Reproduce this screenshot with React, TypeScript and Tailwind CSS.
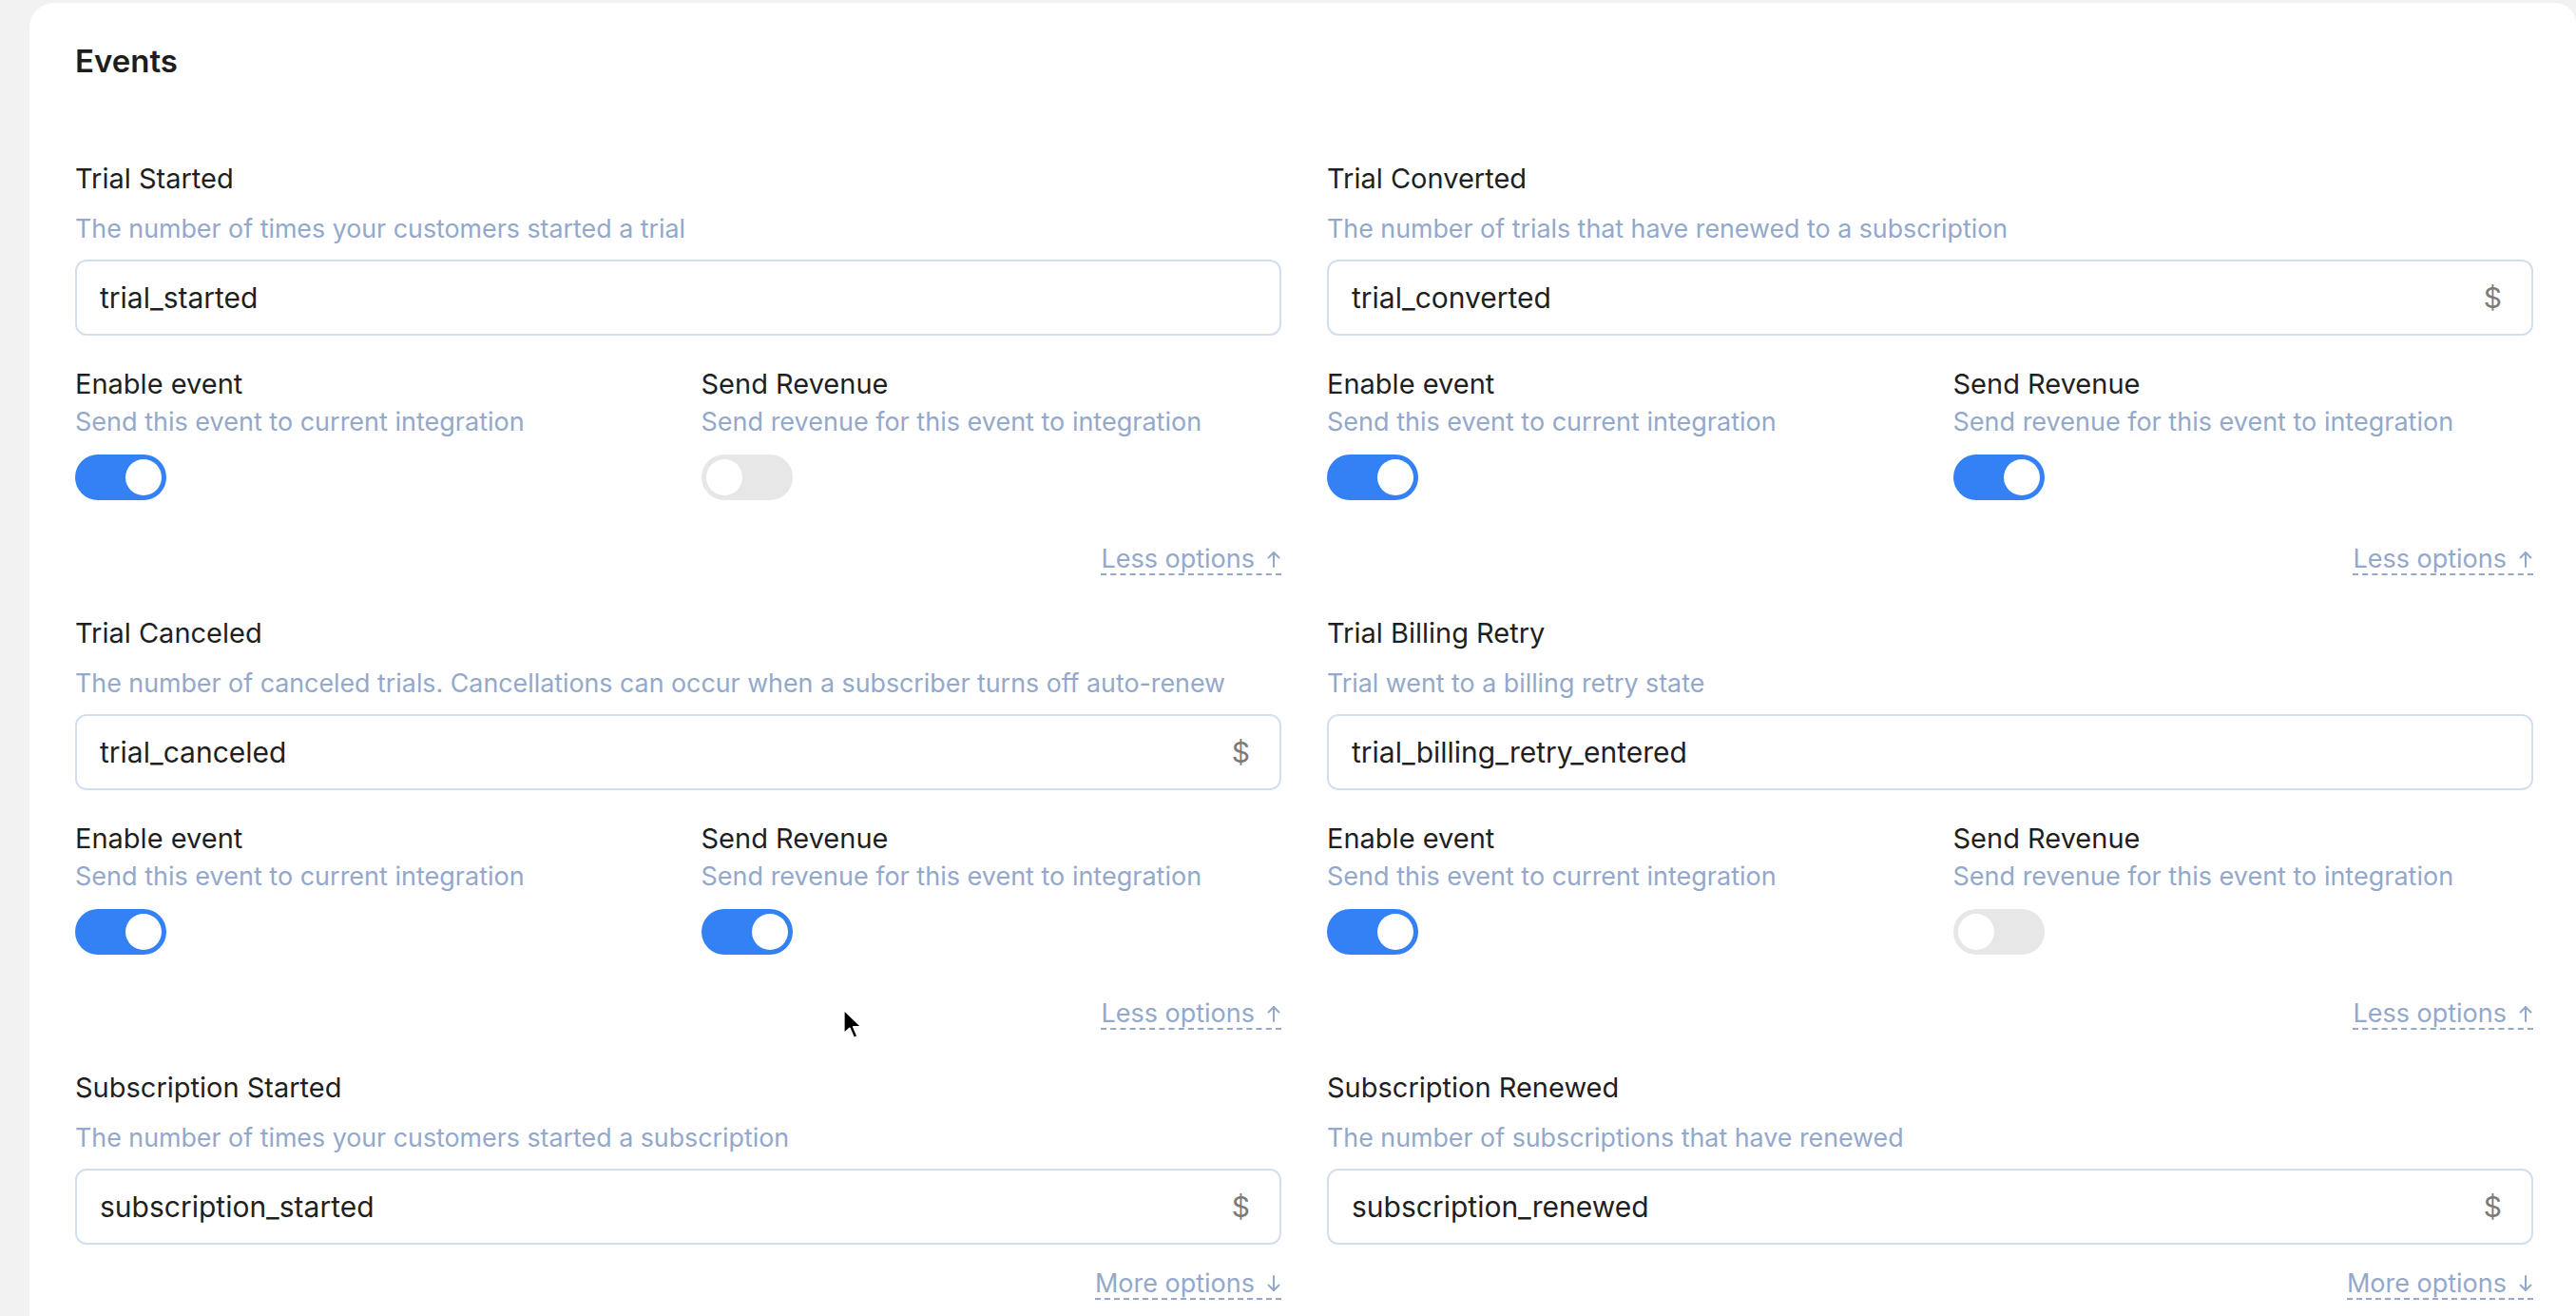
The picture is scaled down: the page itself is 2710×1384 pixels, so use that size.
import React from 'react';

type EventItem = {
  title: string;
  description: string;
  eventName: string;
  revenue: boolean;
  expanded: boolean;
  enabled?: boolean;
  sendRevenue?: boolean;
};

const events: EventItem[] = [
  {
    title: 'Trial Started',
    description: 'The number of times your customers started a trial',
    eventName: 'trial_started',
    revenue: false,
    expanded: true,
    enabled: true,
    sendRevenue: false,
  },
  {
    title: 'Trial Converted',
    description: 'The number of trials that have renewed to a subscription',
    eventName: 'trial_converted',
    revenue: true,
    expanded: true,
    enabled: true,
    sendRevenue: true,
  },
  {
    title: 'Trial Canceled',
    description: 'The number of canceled trials. Cancellations can occur when a subscriber turns off auto-renew',
    eventName: 'trial_canceled',
    revenue: true,
    expanded: true,
    enabled: true,
    sendRevenue: true,
  },
  {
    title: 'Trial Billing Retry',
    description: 'Trial went to a billing retry state',
    eventName: 'trial_billing_retry_entered',
    revenue: false,
    expanded: true,
    enabled: true,
    sendRevenue: false,
  },
  {
    title: 'Subscription Started',
    description: 'The number of times your customers started a subscription',
    eventName: 'subscription_started',
    revenue: true,
    expanded: false,
  },
  {
    title: 'Subscription Renewed',
    description: 'The number of subscriptions that have renewed',
    eventName: 'subscription_renewed',
    revenue: true,
    expanded: false,
  },
];

function Toggle({ on }: { on: boolean }) {
  return (
    <div
      className={`flex h-[48px] w-[96px] items-center rounded-full px-[5px] ${
        on ? 'justify-end bg-[#3381f5]' : 'justify-start bg-[#e7e7e7]'
      }`}
    >
      <div className="h-[38px] w-[38px] rounded-full bg-white" />
    </div>
  );
}

function ToggleField({ label, hint, on }: { label: string; hint: string; on: boolean }) {
  return (
    <div className="flex flex-col">
      <p className="text-[29px] leading-[36px] text-[#1f1f1f]">{label}</p>
      <p className="mt-[4px] text-[27px] leading-[36px] text-[#93a8cb]">{hint}</p>
      <div className="mt-[16px]">
        <Toggle on={on} />
      </div>
    </div>
  );
}

function ArrowUp() {
  return (
    <svg width="16" height="20" viewBox="0 0 16 20" fill="none" stroke="#93a8cb" strokeWidth="2" strokeLinecap="round" strokeLinejoin="round">
      <path d="M8 18V3" />
      <path d="M2.5 8.5L8 3l5.5 5.5" />
    </svg>
  );
}

function ArrowDown() {
  return (
    <svg width="16" height="20" viewBox="0 0 16 20" fill="none" stroke="#93a8cb" strokeWidth="2" strokeLinecap="round" strokeLinejoin="round">
      <path d="M8 2v15" />
      <path d="M2.5 11.5L8 17l5.5-5.5" />
    </svg>
  );
}

function EventBlock({ item }: { item: EventItem }) {
  return (
    <div className={`flex flex-col ${item.expanded ? 'pb-[43px]' : 'pb-[40px]'}`}>
      <p className="text-[29px] leading-[36px] text-[#1f1f1f]">{item.title}</p>
      <p className="mt-[16px] truncate text-[26.8px] leading-[36px] text-[#93a8cb]">{item.description}</p>
      <div className="mt-[15px] flex h-[80px] items-center rounded-[12px] border-2 border-[#d3dfee] pl-[24px] pr-[31px]">
        <span className="flex-1 text-[30px] text-[#1f1f1f]">{item.eventName}</span>
        {item.revenue && <span className="text-[30px] text-[#7b7b7b]">$</span>}
      </div>

      {item.expanded && (
        <div className="mt-[33px] grid grid-cols-2 gap-x-[48px]">
          <ToggleField label="Enable event" hint="Send this event to current integration" on={!!item.enabled} />
          <ToggleField label="Send Revenue" hint="Send revenue for this event to integration" on={!!item.sendRevenue} />
        </div>
      )}

      <div className={`flex justify-end ${item.expanded ? 'mt-[47px]' : 'mt-[26px]'}`}>
        <button className="flex items-center gap-[12px] border-b-2 border-dashed border-[#93a8cb] text-[27px] leading-[30px] text-[#93a8cb]">
          {item.expanded ? 'Less options' : 'More options'}
          {item.expanded ? <ArrowUp /> : <ArrowDown />}
        </button>
      </div>
    </div>
  );
}

function Cursor() {
  return (
    <svg className="absolute left-[886px] top-[1060px]" width="22" height="34" viewBox="0 0 13 20">
      <path d="M1 1v15l3.6-3.4 2.6 6 2.4-1-2.6-5.9H12z" fill="#000" stroke="#fff" strokeWidth="1.1" strokeLinejoin="round" />
    </svg>
  );
}

export default function App() {
  return (
    <div className="relative h-[1384px] w-[2710px] overflow-hidden bg-[#f2f2f2] pl-[31px] pt-[3px] font-['Inter',sans-serif]">
      <section className="h-full rounded-tl-[26px] rounded-tr-[22px] bg-white pl-[48px] pr-[45px] pt-[41px]">
        <h2 className="text-[33px] font-semibold leading-[40px] text-[#1d1d1d]">Events</h2>
        <div className="mt-[86px] grid grid-cols-2 gap-x-[48px]">
          {events.map((item) => (
            <EventBlock item={item} key={item.eventName} />
          ))}
        </div>
      </section>
      <Cursor />
    </div>
  );
}
